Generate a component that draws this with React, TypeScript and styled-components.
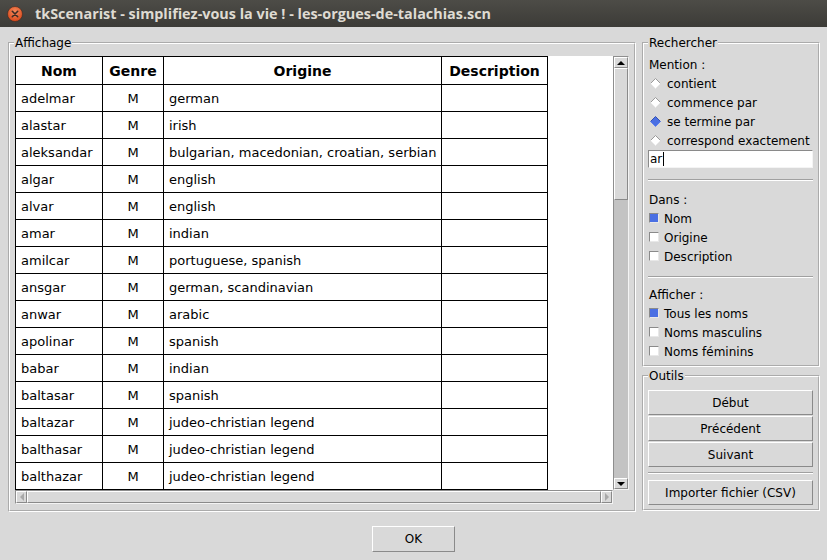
import React from "react";
import styled, { createGlobalStyle } from "styled-components";

const GlobalStyle = createGlobalStyle`
  html, body { margin: 0; padding: 0; background: #d9d9d9; }
  * { box-sizing: border-box; }
`;

const Window = styled.div`
  width: 827px;
  height: 560px;
  background: #d9d9d9;
  display: flex;
  flex-direction: column;
  overflow: hidden;
  font-family: "DejaVu Sans", "Liberation Sans", sans-serif;
  font-size: 12px;
  color: #000;
`;

const TitleBar = styled.div`
  height: 27px;
  flex: none;
  display: flex;
  align-items: center;
  padding-left: 7px;
  gap: 12px;
  background: linear-gradient(#4d4c47, #3c3b37);
`;

const TitleText = styled.span`
  font-family: "Open Sans", "DejaVu Sans", sans-serif;
  font-weight: 700;
  font-size: 14.4px;
  color: #dfdbd2;
  white-space: nowrap;
`;

const Main = styled.div`
  display: flex;
  gap: 6px;
  padding: 9px 0 0 8px;
`;

const Frame = styled.fieldset<{ $w: number; $pad: string }>`
  margin: 0;
  min-width: 0;
  width: ${(p) => p.$w}px;
  border: 2px groove #ffffff;
  padding: ${(p) => p.$pad};
`;

const Legend = styled.legend<{ $shift?: number }>`
  padding: 0 1px;
  margin-left: ${(p) => p.$shift ?? 0}px;
  font-size: 12px;
  line-height: 14px;
  height: 14px;
`;

const ScrollArea = styled.div`
  display: grid;
  grid-template-columns: 598px 16px;
  grid-template-rows: 434px 14px;
`;

const Canvas = styled.div`
  background: #fff;
  overflow: hidden;
`;

const Table = styled.div`
  width: 533px;
  border-top: 1px solid #000;
  border-left: 1px solid #000;
`;

const Row = styled.div<{ $head?: boolean }>`
  display: grid;
  grid-template-columns: 87px 61px 278px 106px;
  height: ${(p) => (p.$head ? 28 : 27)}px;
  border-bottom: 1px solid #000;
  font-size: ${(p) => (p.$head ? 14 : 13)}px;
  font-weight: ${(p) => (p.$head ? 700 : 400)};
`;

const Cell = styled.div<{ $center?: boolean }>`
  border-right: 1px solid #000;
  display: flex;
  align-items: center;
  justify-content: ${(p) => (p.$center ? "center" : "flex-start")};
  padding-left: ${(p) => (p.$center ? 0 : 5)}px;
  white-space: nowrap;
  overflow: hidden;
`;

const VScroll = styled.div`
  display: flex;
  flex-direction: column;
  background: #c3c3c3;
  border: 1px solid;
  border-color: #8e8e8e #f4f4f4 #f4f4f4 #8e8e8e;
`;

const HScroll = styled.div`
  display: flex;
  background: #c3c3c3;
  border: 1px solid;
  border-color: #8e8e8e #f4f4f4 #f4f4f4 #8e8e8e;
`;

const Corner = styled.div`
  background: #d9d9d9;
`;

const Raised = styled.div`
  background: #d9d9d9;
  border: 1px solid;
  border-color: #ffffff #8a8a8a #8a8a8a #ffffff;
`;

const Arrow = styled(Raised)<{ $dir: "up" | "down" | "left" | "right"; $off?: boolean }>`
  flex: none;
  width: ${(p) => (p.$dir === "up" || p.$dir === "down" ? "100%" : "11px")};
  height: ${(p) => (p.$dir === "up" || p.$dir === "down" ? "11px" : "100%")};
  display: flex;
  align-items: center;
  justify-content: center;
  &::after {
    content: "";
    width: 0;
    height: 0;
    border-style: solid;
    border-color: transparent;
    ${(p) =>
      p.$dir === "up"
        ? `border-width: 0 4px 4px 4px; border-bottom-color: #000;`
        : p.$dir === "down"
        ? `border-width: 4px 4px 0 4px; border-top-color: #000;`
        : p.$dir === "left"
        ? `border-width: 4px 4px 4px 0; border-right-color: ${p.$off ? "#a8a8a8" : "#000"};`
        : `border-width: 4px 0 4px 4px; border-left-color: ${p.$off ? "#a8a8a8" : "#000"};`}
  }
`;

const Thumb = styled(Raised)<{ $size?: number }>`
  flex: ${(p) => (p.$size ? "none" : "1")};
  height: ${(p) => (p.$size ? `${p.$size}px` : "auto")};
`;

const Trough = styled.div`
  flex: 1;
`;

const Side = styled.div`
  display: flex;
  flex-direction: column;
  gap: 2px;
  width: 178px;
`;

const Heading = styled.div<{ $h?: number }>`
  height: ${(p) => p.$h ?? 18}px;
  line-height: ${(p) => p.$h ?? 18}px;
  padding-left: 1px;
`;

const OptionRow = styled.div<{ $kind: "radio" | "check" }>`
  height: 19px;
  display: flex;
  align-items: center;
  padding-left: ${(p) => (p.$kind === "radio" ? 2 : 1)}px;
  gap: ${(p) => (p.$kind === "radio" ? 6 : 5)}px;
  white-space: nowrap;
`;

const Box = styled.span<{ $on?: boolean }>`
  width: 10px;
  height: 10px;
  flex: none;
  margin-bottom: 2px;
  background: ${(p) => (p.$on ? "#4a6fe3" : "#ffffff")};
  border: 1px solid;
  border-color: #8a8a8a #e8e8e8 #e8e8e8 #8a8a8a;
`;

const Entry = styled.div`
  height: 18px;
  background: #fff;
  border: 1px solid;
  border-color: #8a8a8a #f4f4f4 #f4f4f4 #8a8a8a;
  display: flex;
  align-items: center;
  padding-left: 1px;
  line-height: 16px;
`;

const Caret = styled.span`
  width: 1px;
  height: 14px;
  background: #000;
  margin-left: 1px;
`;

const Separator = styled.div<{ $top: number; $bottom: number }>`
  height: 2px;
  margin: ${(p) => p.$top}px 0 ${(p) => p.$bottom}px 0;
  border-top: 1px solid #a0a0a0;
  border-bottom: 1px solid #ffffff;
`;

const ButtonStack = styled.div`
  display: flex;
  flex-direction: column;
  gap: 1px;
`;

const Btn = styled.button<{ $w?: number; $h?: number }>`
  width: ${(p) => (p.$w ? `${p.$w}px` : "100%")};
  height: ${(p) => p.$h ?? 25}px;
  background: #d9d9d9;
  border: 1px solid;
  border-color: #ffffff #8a8a8a #8a8a8a #ffffff;
  font-family: "DejaVu Sans", sans-serif;
  font-size: 12px;
  color: #000;
  padding: 0;
  margin: 0;
`;

const Footer = styled.div`
  display: flex;
  justify-content: center;
  padding-top: 14px;
`;

const rows: [string, string][] = [
  ["adelmar", "german"],
  ["alastar", "irish"],
  ["aleksandar", "bulgarian, macedonian, croatian, serbian"],
  ["algar", "english"],
  ["alvar", "english"],
  ["amar", "indian"],
  ["amilcar", "portuguese, spanish"],
  ["ansgar", "german, scandinavian"],
  ["anwar", "arabic"],
  ["apolinar", "spanish"],
  ["babar", "indian"],
  ["baltasar", "spanish"],
  ["baltazar", "judeo-christian legend"],
  ["balthasar", "judeo-christian legend"],
  ["balthazar", "judeo-christian legend"],
];

const CloseIcon = () => (
  <svg width="16" height="16" viewBox="0 0 16 16">
    <defs>
      <radialGradient id="cg" cx="50%" cy="35%" r="65%">
        <stop offset="0%" stopColor="#f58a5c" />
        <stop offset="100%" stopColor="#d9481a" />
      </radialGradient>
    </defs>
    <circle cx="8" cy="8" r="7.5" fill="url(#cg)" stroke="#3a2a22" strokeWidth="0.6" />
    <path d="M5.3 5.3 L10.7 10.7 M10.7 5.3 L5.3 10.7" stroke="#3c2c25" strokeWidth="1.6" strokeLinecap="round" />
  </svg>
);

const Diamond = ({ on }: { on?: boolean }) => (
  <svg width="11" height="11" viewBox="0 0 11 11" style={{ flex: "none" }}>
    <polygon points="5.5,0.5 10.5,5.5 5.5,10.5 0.5,5.5" fill={on ? "#4a6fe3" : "#ffffff"} />
    <polyline points="0.5,5.5 5.5,0.5 10.5,5.5" fill="none" stroke={on ? "#3552b0" : "#9a9a9a"} strokeWidth="1" />
    <polyline points="0.5,5.5 5.5,10.5 10.5,5.5" fill="none" stroke={on ? "#5a7ef0" : "#ececec"} strokeWidth="1" />
  </svg>
);

export default function App() {
  return (
    <Window>
      <GlobalStyle />
      <TitleBar>
        <CloseIcon />
        <TitleText>tkScenarist - simplifiez-vous la vie ! - les-orgues-de-talachias.scn</TitleText>
      </TitleBar>
      <Main>
        <Frame $w={628} $pad="6px 5px 6px 5px">
          <Legend $shift={-1}>Affichage</Legend>
          <ScrollArea>
            <Canvas>
              <Table>
                <Row $head>
                  <Cell $center>Nom</Cell>
                  <Cell $center>Genre</Cell>
                  <Cell $center>Origine</Cell>
                  <Cell $center>Description</Cell>
                </Row>
                {rows.map(([n, o]) => (
                  <Row key={n}>
                    <Cell>{n}</Cell>
                    <Cell $center>M</Cell>
                    <Cell>{o}</Cell>
                    <Cell />
                  </Row>
                ))}
              </Table>
            </Canvas>
            <VScroll>
              <Arrow $dir="up" />
              <Thumb $size={132} />
              <Trough />
              <Arrow $dir="down" />
            </VScroll>
            <HScroll>
              <Arrow $dir="left" $off />
              <Thumb />
              <Arrow $dir="right" $off />
            </HScroll>
            <Corner />
          </ScrollArea>
        </Frame>
        <Side>
          <Frame $w={178} $pad="6px 5px 4px 4px">
            <Legend>Rechercher</Legend>
            <Heading>Mention :</Heading>
            <OptionRow $kind="radio"><Diamond />contient</OptionRow>
            <OptionRow $kind="radio"><Diamond />commence par</OptionRow>
            <OptionRow $kind="radio"><Diamond on />se termine par</OptionRow>
            <OptionRow $kind="radio"><Diamond />correspond exactement</OptionRow>
            <Entry>ar<Caret /></Entry>
            <Separator $top={11} $bottom={10} />
            <Heading>Dans :</Heading>
            <OptionRow $kind="check"><Box $on />Nom</OptionRow>
            <OptionRow $kind="check"><Box />Origine</OptionRow>
            <OptionRow $kind="check"><Box />Description</OptionRow>
            <Separator $top={10} $bottom={9} />
            <Heading $h={17}>Afficher :</Heading>
            <OptionRow $kind="check"><Box $on />Tous les noms</OptionRow>
            <OptionRow $kind="check"><Box />Noms masculins</OptionRow>
            <OptionRow $kind="check"><Box />Noms féminins</OptionRow>
          </Frame>
          <Frame $w={178} $pad="7px 5px 4px 4px">
            <Legend>Outils</Legend>
            <ButtonStack>
              <Btn>Début</Btn>
              <Btn>Précédent</Btn>
              <Btn>Suivant</Btn>
            </ButtonStack>
            <Separator $top={5} $bottom={6} />
            <Btn>Importer fichier (CSV)</Btn>
          </Frame>
        </Side>
      </Main>
      <Footer>
        <Btn $w={83} $h={26}>OK</Btn>
      </Footer>
    </Window>
  );
}
